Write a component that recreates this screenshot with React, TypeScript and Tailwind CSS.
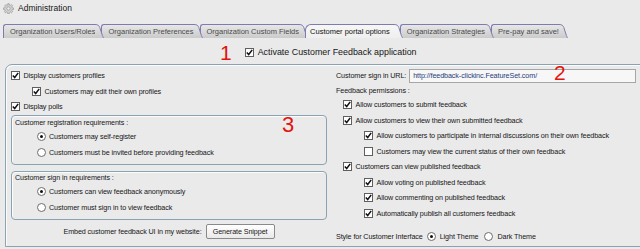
import React from "react";

function Check({ checked = true }: { checked?: boolean }) {
  return (
    <span className="flex h-[9px] w-[9px] shrink-0 items-center justify-center border border-[#5f5f5f] bg-white">
      {checked && (
        <svg width="7" height="7" viewBox="0 0 7 7">
          <path d="M0.8 3.5 L2.7 5.5 L6.2 0.9" fill="none" stroke="#111" strokeWidth="1.5" />
        </svg>
      )}
    </span>
  );
}

function Radio({ checked = false }: { checked?: boolean }) {
  return (
    <span className="flex h-[9px] w-[9px] shrink-0 items-center justify-center rounded-full border border-[#6d6d6d] bg-white">
      {checked && <span className="h-[3px] w-[3px] rounded-full bg-[#111]" />}
    </span>
  );
}

function CheckRow({ label, checked = true, className }: { label: string; checked?: boolean; className: string }) {
  return (
    <div className={`flex h-[15.5px] items-center gap-[3.5px] ${className}`}>
      <Check checked={checked} />
      <span className="whitespace-nowrap leading-none tracking-[-0.1px]">{label}</span>
    </div>
  );
}

function RadioRow({ label, checked = false }: { label: string; checked?: boolean }) {
  return (
    <div className="flex h-[15.5px] items-center gap-[3px] pl-[25px]">
      <Radio checked={checked} />
      <span className="whitespace-nowrap leading-none tracking-[-0.1px]">{label}</span>
    </div>
  );
}

type TabProps = { label: string; active?: boolean; z: string; id: string; first?: boolean };

function Tab({ label, active = false, z, id, first = false }: TabProps) {
  const top = active ? "#f6f6f6" : "#e7e7e7";
  const bottom = active ? "#efefef" : "#cbcbcb";
  return (
    <div className={`relative flex h-[14px] ${z} ${first ? "" : "ml-[-3px]"}`}>
      <div
        className={`flex h-full items-center whitespace-nowrap border-l border-t border-[#7d7bb0] text-[7.5px] leading-none ${
          active
            ? "rounded-tl-[6px] bg-gradient-to-b from-[#f6f6f6] to-[#efefef] pl-[4px] pr-[4px] text-[#111]"
            : "rounded-tl-[3px] bg-gradient-to-b from-[#e7e7e7] to-[#cbcbcb] pl-[6px] text-[#4a4a4a]"
        }`}
      >
        {label}
      </div>
      <svg width="9" height="14" viewBox="0 0 9 14" className="shrink-0">
        <defs>
          <linearGradient id={id} x1="0" y1="0" x2="0" y2="1">
            <stop offset="0" stopColor={top} />
            <stop offset="1" stopColor={bottom} />
          </linearGradient>
        </defs>
        <path d="M0 0.5 C3 0.5 4 1.5 4.8 3.5 L7.4 11.5 C8 13.2 8.5 14 9 14 L0 14 Z" fill={`url(#${id})`} />
        <path d="M0 0.5 C3 0.5 4 1.5 4.8 3.5 L7.4 11.5 C8 13.2 8.5 14 9 14" fill="none" stroke="#7d7bb0" strokeWidth="1" />
      </svg>
    </div>
  );
}

function Gear() {
  return (
    <svg width="11" height="11" viewBox="0 0 24 24" className="shrink-0">
      <path
        d="M10.3 1.5h3.4l.5 2.9a8 8 0 0 1 2 .8l2.4-1.7 2.4 2.4-1.7 2.4a8 8 0 0 1 .8 2l2.9.5v3.4l-2.9.5a8 8 0 0 1-.8 2l1.7 2.4-2.4 2.4-2.4-1.7a8 8 0 0 1-2 .8l-.5 2.9h-3.4l-.5-2.9a8 8 0 0 1-2-.8l-2.4 1.7-2.4-2.4 1.7-2.4a8 8 0 0 1-.8-2l-2.9-.5v-3.4l2.9-.5a8 8 0 0 1 .8-2L3.8 5.9l2.4-2.4 2.4 1.7a8 8 0 0 1 2-.8z"
        fill="#d0d0d0"
        stroke="#8e8e8e"
        strokeWidth="1.3"
      />
      <circle cx="12" cy="12" r="3.6" fill="#eaeaea" stroke="#8e8e8e" strokeWidth="1.3" />
    </svg>
  );
}

export default function App() {
  return (
    <div className="h-[249px] w-[640px] overflow-hidden bg-[#eaeaea] font-['Liberation_Sans',Arial,sans-serif] text-[7.2px] text-[#161616]">
      {/* header */}
      <div className="flex h-[16px] items-center gap-[4px] pl-[3px]">
        <Gear />
        <span className="text-[8.5px] leading-none text-[#161616]">Administration</span>
      </div>

      {/* tabs */}
      <div className="mt-[8px] flex pl-[3px]">
        <Tab label="Organization Users/Roles" z="z-[6]" id="t1" first />
        <Tab label="Organization Preferences" z="z-[5]" id="t2" />
        <Tab label="Organization Custom Fields" z="z-[4]" id="t3" />
        <Tab label="Customer portal options" z="z-[10]" id="t4" active />
        <Tab label="Organization Strategies" z="z-[2]" id="t5" />
        <Tab label="Pre-pay and save!" z="z-[1]" id="t6" />
      </div>

      {/* activate row */}
      <div className="flex h-[26px] items-center pt-[3px]">
        <span className="ml-[220px] text-[21px] leading-none text-[#e3140f]">1</span>
        <span className="ml-[13px]">
          <Check />
        </span>
        <span className="ml-[4px] whitespace-nowrap text-[8.9px] leading-none text-[#161616]">
          Activate Customer Feedback application
        </span>
      </div>

      {/* main panel */}
      <div className="ml-[5px] flex h-[183px] w-[660px] rounded-tl-[7px] border border-[#89a3b4] pt-[3px] shadow-[inset_1px_1px_0_#fbfbfb]">
        {/* left column */}
        <div className="w-[321px] shrink-0 pl-[5px]">
          <CheckRow label="Display customers profiles" className="pl-0" />
          <CheckRow label="Customers may edit their own profiles" className="pl-[21px]" />
          <CheckRow label="Display polls" className="pl-0" />

          <div className="relative mt-[0.5px] rounded-[4px] border border-[#89a3b4] pb-[4px] shadow-[inset_1px_1px_0_#fbfbfb]">
            <div className="flex h-[13px] items-center pl-[3px] leading-none tracking-[-0.1px]">Customer registration requirements :</div>
            <RadioRow label="Customers may self-register" checked />
            <RadioRow label="Customers must be invited before providing feedback" />
            <span className="absolute left-[270px] top-[-2px] text-[22px] leading-none text-[#e3140f]">3</span>
          </div>

          <div className="mt-[6px] rounded-[4px] border border-[#89a3b4] pb-[4px] shadow-[inset_1px_1px_0_#fbfbfb]">
            <div className="flex h-[12px] items-center pl-[3px] leading-none tracking-[-0.1px]">Customer sign in requirements :</div>
            <RadioRow label="Customers can view feedback anonymously" checked />
            <RadioRow label="Customer must sign in to view feedback" />
          </div>

          <div className="mt-[4px] flex h-[15px] items-center justify-center">
            <span className="whitespace-nowrap leading-none tracking-[-0.1px]">Embed customer feedback UI in my website:</span>
            <button className="ml-[4px] flex h-[15px] w-[69px] items-center justify-center rounded-[2px] border border-[#8a8a8a] bg-gradient-to-b from-[#ffffff] to-[#e9e9e9] text-[7.2px] leading-none tracking-[-0.1px] text-[#161616]">
              Generate Snippet
            </button>
          </div>
        </div>

        {/* right column */}
        <div className="ml-[9px] flex-1">
          <div className="relative flex h-[16px] items-center">
            <span className="whitespace-nowrap leading-none tracking-[-0.1px]">Customer sign in URL:</span>
            <div className="ml-[3px] flex h-[14px] w-[227px] items-center border border-[#a6a6a6] bg-[#f7f7f7] pl-[3px] leading-none tracking-[-0.1px] text-[#1f3c7a]">
              http://feedback-clickinc.FeatureSet.com/
            </div>
            <span className="absolute left-[218px] top-[-6px] text-[21px] leading-none text-[#e3140f]">2</span>
          </div>
          <div className="flex h-[13px] items-center leading-none tracking-[-0.1px]">Feedback permissions :</div>
          <CheckRow label="Allow customers to submit feedback" className="pl-[7px]" />
          <CheckRow label="Allow customers to view their own submitted feedback" className="pl-[7px]" />
          <CheckRow
            label="Allow customers to participate in internal discussions on their own feedback"
            className="pl-[28px]"
          />
          <CheckRow label="Customers may view the current status of their own feedback" checked={false} className="pl-[28px]" />
          <CheckRow label="Customers can view published feedback" className="pl-[7px]" />
          <CheckRow label="Allow voting on published feedback" className="pl-[28px]" />
          <CheckRow label="Allow commenting on published feedback" className="pl-[28px]" />
          <CheckRow label="Automatically publish all customers feedback" className="pl-[28px]" />

          <div className="mt-[8.5px] flex h-[14.5px] items-center">
            <span className="whitespace-nowrap leading-none tracking-[-0.1px]">Style for Customer Interface</span>
            <span className="ml-[4px]">
              <Radio checked />
            </span>
            <span className="ml-[4px] whitespace-nowrap leading-none tracking-[-0.1px]">Light Theme</span>
            <span className="ml-[6px]">
              <Radio />
            </span>
            <span className="ml-[4px] whitespace-nowrap leading-none tracking-[-0.1px]">Dark Theme</span>
          </div>
        </div>
      </div>
    </div>
  );
}
